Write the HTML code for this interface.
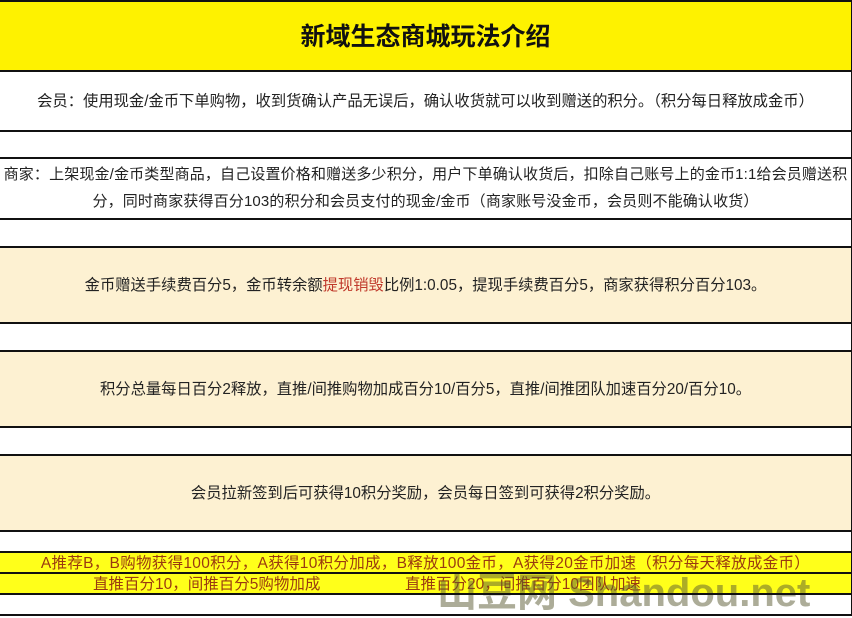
<!DOCTYPE html>
<html><head><meta charset="utf-8"><style>
body{margin:0;width:852px;height:616px;background:#fff;position:relative;overflow:hidden;font-family:"Liberation Sans","Noto Sans CJK SC",sans-serif;color:#222}
.r{position:absolute;left:0;width:851px;border-right:1px solid #111;display:flex;align-items:center;justify-content:center;text-align:center;font-size:15.3px;white-space:nowrap}
.l{position:absolute;left:0;width:852px;height:1.5px;background:#111}
</style></head><body>
<div class="r" style="top:0;height:70px;background:#fef200;font-size:25px;font-weight:bold;color:#111">新域生态商城玩法介绍</div>
<div class="r" style="top:70px;height:60px">会员：使用现金/金币下单购物，收到货确认产品无误后，确认收货就可以收到赠送的积分。（积分每日释放成金币）</div>
<div class="r" style="top:130px;height:28px"></div>
<div class="r" style="top:158px;height:60px;line-height:27px;white-space:normal;font-size:15px;letter-spacing:0.15px">商家：上架现金/金币类型商品，自己设置价格和赠送多少积分，用户下单确认收货后，扣除自己账号上的金币1:1给会员赠送积<br>分，同时商家获得百分103的积分和会员支付的现金/金币（商家账号没金币，会员则不能确认收货）</div>
<div class="r" style="top:218px;height:28px"></div>
<div class="r" style="top:246px;height:76px;background:#fdf1d2">金币赠送手续费百分5，金币转余额<span style="color:#c0392b">提现销毁</span>比例1:0.05，提现手续费百分5，商家获得积分百分103。</div>
<div class="r" style="top:322px;height:28px"></div>
<div class="r" style="top:350px;height:76px;background:#fdf1d2">积分总量每日百分2释放，直推/间推购物加成百分10/百分5，直推/间推团队加速百分20/百分10。</div>
<div class="r" style="top:426px;height:28px"></div>
<div class="r" style="top:454px;height:76px;background:#fdf1d2">会员拉新签到后可获得10积分奖励，会员每日签到可获得2积分奖励。</div>
<div class="r" style="top:530px;height:21px"></div>
<div class="r" style="top:551px;height:22px;background:#ffff1a;color:#9a3a10;font-size:15.5px;letter-spacing:0.3px">A推荐B，B购物获得100积分，A获得10积分加成，B释放100金币，A获得20金币加速（积分每天释放成金币）</div>
<div class="r" style="top:573px;height:20px;background:#ffff1a;color:#9a3a10;font-size:15.5px;justify-content:flex-start"><span style="position:absolute;left:93px">直推百分10，间推百分5购物加成</span><span style="position:absolute;left:405px">直推百分20，间推百分10团队加速</span></div>
<div class="r" style="top:593px;height:21px"></div>
<div style="position:absolute;left:437px;top:560px;font-size:40px;color:rgba(90,90,50,0.5);font-weight:bold;white-space:nowrap">山豆网 Shandou.net</div>
<div class="l" style="top:0"></div><div class="l" style="top:70px"></div><div class="l" style="top:130px"></div><div class="l" style="top:157px"></div><div class="l" style="top:218px"></div><div class="l" style="top:246px"></div><div class="l" style="top:322px"></div><div class="l" style="top:350px"></div><div class="l" style="top:426px"></div><div class="l" style="top:454px"></div><div class="l" style="top:530px"></div><div class="l" style="top:551px"></div><div class="l" style="top:572px"></div><div class="l" style="top:593px"></div><div class="l" style="top:614px"></div>
</body></html>
